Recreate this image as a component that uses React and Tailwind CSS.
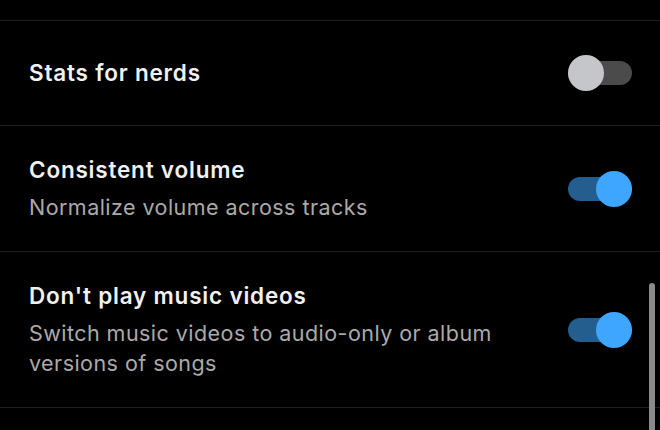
import { useState } from "react";

const rows = [
  { id: "stats", title: "Stats for nerds", on: false },
  {
    id: "volume",
    title: "Consistent volume",
    desc: "Normalize volume across tracks",
    on: true,
  },
  {
    id: "videos",
    title: "Don't play music videos",
    desc: "Switch music videos to audio-only or album versions of songs",
    on: true,
  },
];

const Toggle = ({ on, onChange }) => (
  <button
    type="button"
    onClick={onChange}
    className="relative w-[64px] h-[36px] shrink-0"
  >
    <span
      className={`absolute left-0 right-0 top-[6px] h-[24px] rounded-full ${
        on ? "bg-[#245e8f]" : "bg-[#4b4b4b]"
      }`}
    />
    <span
      className={`absolute top-0 w-[36px] h-[36px] rounded-full ${
        on ? "right-0 bg-[#3ea6ff]" : "left-0 bg-[#c4c6c9]"
      }`}
    />
  </button>
);

const App = () => {
  const [state, setState] = useState(
    Object.fromEntries(rows.map((r) => [r.id, r.on]))
  );

  return (
    <div
      className="relative w-[660px] h-[430px] overflow-hidden bg-black text-white"
      style={{ fontFamily: "Inter, 'Noto Sans', sans-serif" }}
    >
      <div className="h-[20px]" />
      <div className="border-t border-[#1e1e1e]">
        {rows.map((r) => (
          <div
            key={r.id}
            className={`flex items-center justify-between pl-[29px] pr-[28px] border-b border-[#1e1e1e] ${
              r.desc ? "pt-[30px] pb-[29px]" : "h-[105px]"
            }`}
          >
            <div className="max-w-[500px]">
              <div className="text-[22.5px] leading-[28px] font-semibold tracking-[0.8px] text-[#f1f1f1]">
                {r.title}
              </div>
              {r.desc && (
                <div className="mt-[8px] text-[21.5px] leading-[30px] tracking-[0.45px] text-[#aaaaaa]">
                  {r.desc}
                </div>
              )}
            </div>
            <Toggle
              on={state[r.id]}
              onChange={() => setState((s) => ({ ...s, [r.id]: !s[r.id] }))}
            />
          </div>
        ))}
      </div>
      <div className="absolute right-[5px] top-[283px] w-[6px] h-[160px] rounded-full bg-[#8a8a8a]" />
    </div>
  );
};

export default App;
